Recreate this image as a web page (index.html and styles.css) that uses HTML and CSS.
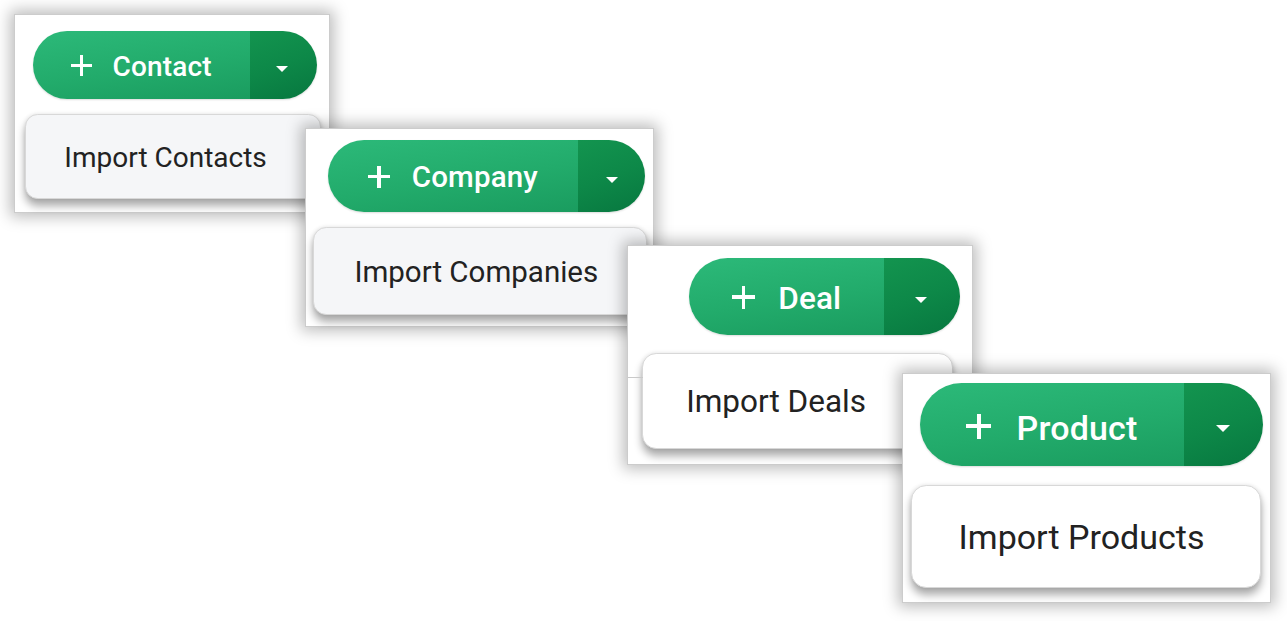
FILE: index.html
```html
<!DOCTYPE html>
<html lang="en">
<head>
<meta charset="utf-8">
<title>Add buttons</title>
<link rel="stylesheet" href="styles.css">
</head>
<body>
<div class="canvas">
  <section class="shot shot-contact">
    <div class="split-btn">
      <span class="btn-main"><span class="plus"></span><span class="label">Contact</span></span>
      <span class="btn-drop"><span class="caret"></span></span>
    </div>
    <div class="menu-item gray">Import Contacts</div>
  </section>

  <section class="shot shot-company">
    <div class="split-btn">
      <span class="btn-main"><span class="plus"></span><span class="label">Company</span></span>
      <span class="btn-drop"><span class="caret"></span></span>
    </div>
    <div class="menu-item gray">Import Companies</div>
  </section>

  <section class="shot shot-deal">
    <div class="rule"></div>
    <div class="split-btn">
      <span class="btn-main"><span class="plus"></span><span class="label">Deal</span></span>
      <span class="btn-drop"><span class="caret"></span></span>
    </div>
    <div class="menu-item">Import Deals</div>
  </section>

  <section class="shot shot-product">
    <div class="split-btn">
      <span class="btn-main"><span class="plus"></span><span class="label">Product</span></span>
      <span class="btn-drop"><span class="caret"></span></span>
    </div>
    <div class="menu-item">Import Products</div>
  </section>
</div>
</body>
</html>
```

FILE: styles.css
```css
* { box-sizing: border-box; }

html, body {
  margin: 0;
  padding: 0;
  background: #ffffff;
}

body {
  font-family: Roboto, "Liberation Sans", Arial, sans-serif;
}

.canvas {
  position: relative;
  width: 1287px;
  height: 621px;
  overflow: hidden;
  background: #ffffff;
}

/* each screenshot card is placed on a free canvas */
.shot {
  position: absolute;
  background: #ffffff;
  border: 1px solid #cccccc;
  box-shadow: 0 0 14px 4px rgba(0, 0, 0, 0.26);
  display: flex;
  flex-direction: column;
  align-items: flex-start;
}

.shot-contact {
  left: 14px; top: 14px; width: 316px; height: 199px;
  font-size: 28px;
  padding: 16px 0 0 18px;
}
.shot-contact .menu-item { margin: 15px 0 0 -8px; width: 296px; height: 85px; }

.shot-company {
  left: 305px; top: 128px; width: 349px; height: 199px;
  font-size: 29.5px;
  padding: 11px 0 0 22px;
}
.shot-company .split-btn { width: 317px; }
.shot-company .menu-item { margin: 15px 0 0 -15px; width: 334px; height: 88px; }

.shot-deal {
  left: 627px; top: 245px; width: 346px; height: 220px;
  font-size: 31.5px;
  padding: 12px 12px 0 14px;
  align-items: flex-end;
}
.shot-deal .menu-item { margin-top: 18px; align-self: flex-start; width: 311px; height: 96px; }

.shot-product {
  left: 902px; top: 373px; width: 369px; height: 230px;
  font-size: 34px;
  padding: 9px 0 0 17px;
}
.shot-product .split-btn { width: 343px; }
.shot-product .btn-main { padding-top: 0.2em; }
.shot-product .menu-item { margin: 19px 0 0 -9px; width: 350px; height: 103px; }

.rule {
  position: absolute;
  left: 0;
  top: 131px;
  width: 15px;
  height: 1px;
  background: #c9c9c9;
}

/* split button */
.split-btn {
  display: flex;
  height: 2.43em;
  border-radius: 1.25em;
  overflow: hidden;
  color: #ffffff;
  box-shadow: 0 1px 2px rgba(0, 0, 0, 0.14);
}

.btn-main {
  flex: 1 1 auto;
  display: flex;
  align-items: center;
  gap: 0.74em;
  padding: 0.14em 1.37em 0 1.36em;
  background: linear-gradient(172deg, #2cb979 0%, #22ab6b 55%, #1a9c5f 100%);
}

.label {
  font-weight: 500;
  line-height: 1;
  letter-spacing: 0.005em;
}

.plus {
  position: relative;
  width: 0.74em;
  height: 0.74em;
  flex: none;
  margin-top: -0.08em;
}
.plus::before,
.plus::after {
  content: "";
  position: absolute;
  background: #ffffff;
}
.plus::before {
  left: 0; right: 0;
  top: calc(50% - 0.055em);
  height: 0.11em;
}
.plus::after {
  top: 0; bottom: 0;
  left: calc(50% - 0.055em);
  width: 0.11em;
}

.btn-drop {
  flex: none;
  width: 2.4em;
  display: flex;
  align-items: center;
  justify-content: center;
  padding-right: 0.08em;
  background: linear-gradient(160deg, #13944f 0%, #0d8848 50%, #07773f 100%);
}

.caret {
  width: 0;
  height: 0;
  margin-top: 0.26em;
  border-left: 0.22em solid transparent;
  border-right: 0.22em solid transparent;
  border-top: 0.22em solid #ffffff;
}

/* dropdown menu item */
.menu-item {
  display: flex;
  align-items: center;
  padding: 0.06em 0 0 1.37em;
  background: #ffffff;
  color: #222222;
  font-weight: 400;
  border: 1px solid #d8d8d8;
  border-radius: 0.45em;
  box-shadow: 0 7px 8px rgba(0, 0, 0, 0.33), 0 0 4px rgba(0, 0, 0, 0.1);
  white-space: nowrap;
}
.menu-item.gray {
  background: #f5f6f8;
}
```
